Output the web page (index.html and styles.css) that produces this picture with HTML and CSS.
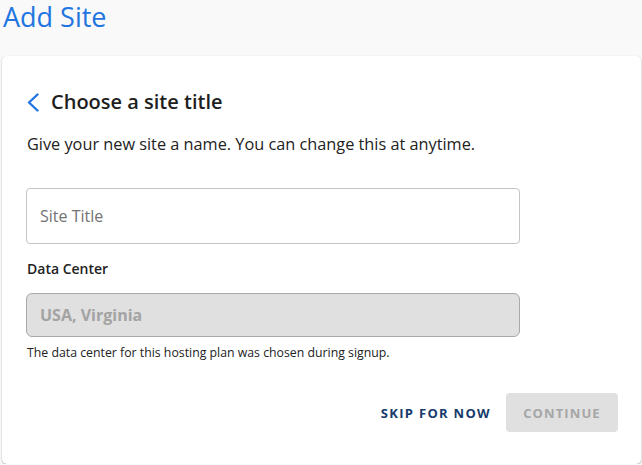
FILE: index.html
```html
<!DOCTYPE html>
<html lang="en">
<head>
<meta charset="utf-8">
<title>Add Site</title>
<link rel="stylesheet" href="styles.css">
</head>
<body>
<div class="page">
  <h1 class="page-title">Add Site</h1>
  <div class="card">
    <div class="card-head">
      <svg class="back" width="13" height="19" viewBox="0 0 13 19"><polyline points="10.5,1.5 2,9.5 10.5,17.5" fill="none" stroke="#2275e0" stroke-width="2.4" stroke-linecap="round" stroke-linejoin="round"/></svg>
      <h2 class="card-title">Choose a site title</h2>
    </div>
    <p class="intro">Give your new site a name. You can change this at anytime.</p>
    <div class="field">
      <input class="text-input" type="text" placeholder="Site Title">
    </div>
    <div class="label">Data Center</div>
    <div class="select">USA, Virginia</div>
    <div class="helper">The data center for this hosting plan was chosen during signup.</div>
    <div class="actions">
      <button class="btn-link">SKIP FOR NOW</button>
      <button class="btn-primary" disabled>CONTINUE</button>
    </div>
  </div>
</div>
</body>
</html>
```

FILE: styles.css
```css
* { box-sizing: border-box; }
html, body {
  margin: 0;
  padding: 0;
  background: #f9f9f9;
  font-family: "Open Sans", "Noto Sans", sans-serif;
  color: #222;
}
.page {
  padding: 0 1px 0 2px;
}
.page-title {
  margin: 0 0 0 1px;
  height: 56px;
  padding-top: 2px;
  font-size: 27px;
  line-height: 30px;
  font-weight: 400;
  color: #2275e0;
}
.card {
  background: #fff;
  border-radius: 5px;
  box-shadow: 0 1px 2px rgba(0,0,0,0.28), 0 0 1px rgba(0,0,0,0.08);
  padding: 32px 23px 30px 24px;
  height: 408px;
}
.card-head {
  display: flex;
  align-items: center;
  gap: 11px;
  height: 28px;
  padding-left: 1px;
}
.back { display: block; }
.card-title {
  margin: 0;
  font-size: 20px;
  line-height: 28px;
  font-weight: 600;
  color: #1e1e1e;
}
.intro {
  margin: 16px 0 0 1px;
  font-size: 16.3px;
  line-height: 24px;
  color: #222;
}
.field { margin-top: 32px; }
.text-input {
  display: block;
  width: 494px;
  height: 56px;
  border: 1px solid #c4c4c4;
  border-radius: 4px;
  padding: 0 13px;
  font-family: inherit;
  font-size: 16px;
  color: #222;
  background: #fff;
  outline: none;
}
.text-input::placeholder { color: #737373; }
.label {
  margin: 15px 0 0 1px;
  font-size: 14px;
  line-height: 20px;
  font-weight: 600;
  color: #222;
}
.select {
  margin-top: 14px;
  width: 494px;
  height: 44px;
  border: 1px solid #a9a9a9;
  border-radius: 6px;
  background: #e0e0e0;
  padding: 0 13px;
  display: flex;
  align-items: center;
  font-size: 16px;
  font-weight: 700;
  color: #a3a3a3;
}
.helper {
  margin: 8px 0 0 1px;
  font-size: 12.3px;
  line-height: 16px;
  color: #222;
}
.actions {
  margin-top: 32px;
  display: flex;
  justify-content: flex-end;
  align-items: center;
}
.btn-link, .btn-primary {
  font-family: inherit;
  font-size: 13px;
  font-weight: 700;
  border: none;
  height: 39px;
  border-radius: 4px;
  cursor: pointer;
}
.btn-link {
  background: transparent;
  color: #173b6c;
  letter-spacing: 1.3px;
  padding: 0 15px 0 16px;
}
.btn-primary {
  background: #e0e0e0;
  color: #a6a6a6;
  letter-spacing: 1.1px;
  width: 112px;
  padding: 0;
}
```
